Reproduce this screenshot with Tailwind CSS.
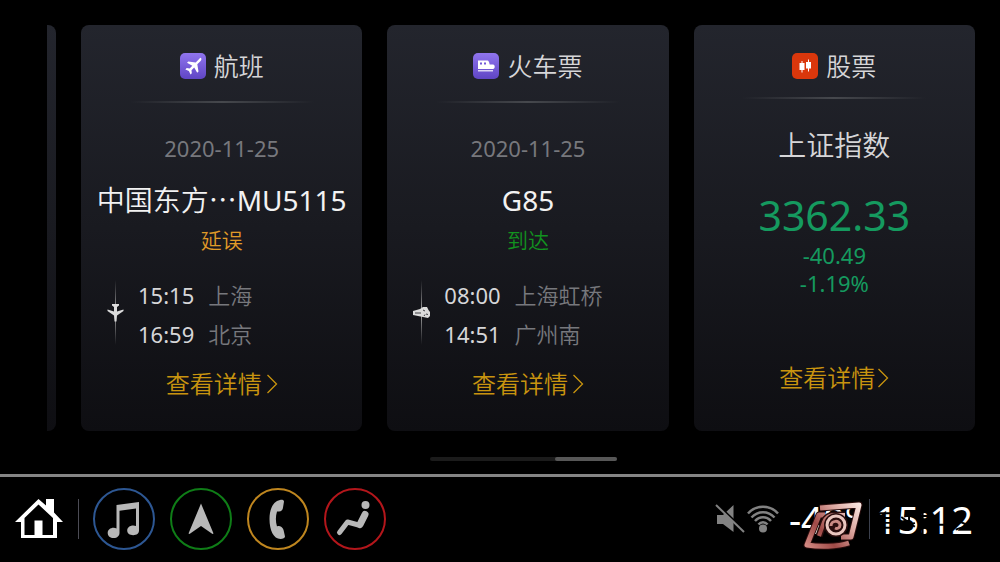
<!DOCTYPE html>
<html lang="zh-CN" class="h-full">

<head>
  <meta charset="UTF-8" />
  <meta name="viewport" content="width=device-width, initial-scale=1.0" />
  <title>车载首页</title>
  <script src="https://cdn.jsdelivr.net/npm/@tailwindcss/browser@4"></script>
</head>

<body class="min-h-screen flex flex-col bg-black text-[#d6d6d8] font-[350] font-['Noto_Sans','Noto_Sans_CJK_SC',sans-serif] overflow-hidden">

  <!-- Cards -->
  <main class="flex-1 flex flex-col pt-[25px] pl-[47px]">
    <div class="flex gap-[25px] pr-[25px]">

      <!-- edge of the previous card -->
      <div class="w-[9px] shrink-0 rounded-r-lg bg-linear-to-b from-[#23252d] via-[#191a20] to-[#0e0e12]"></div>

      <!-- Flight -->
      <article class="flex-1 min-w-0 flex flex-col items-center rounded-lg pt-6 pb-[31px] bg-linear-to-b from-[#23252d] via-[#191a20] to-[#0e0e12]">
        <h2 class="flex items-center gap-2 h-[34px] text-[25px] leading-[34px]">
          <svg class="size-[26px]" viewBox="0 0 26 26">
            <defs>
              <linearGradient id="purple" x1="0" y1="0" x2="0" y2="1">
                <stop offset="0" stop-color="#9075ee" />
                <stop offset="1" stop-color="#5f45c4" />
              </linearGradient>
            </defs>
            <rect width="26" height="26" rx="5" fill="url(#purple)" />
            <path fill="#fff" d="M21 5c.8.8.4 2-.4 2.900l-3.300 3.300 1.200 7.300-1.300 1.300-3-5.200-2.700 2.600.3 3-1.300 1.300-1.600-3.500-3.500-1.600 1.300-1.300 3 .3 2.600-2.700-5.300-3 1.300-1.300 7.400 1.200 3.200-3.400c.8-.8 1.500-1.800 2.100-1.200z" />
          </svg>
          航班
        </h2>
        <div class="mt-[18px] w-[184px] h-[2px] bg-linear-to-r from-transparent via-[#46484d] to-transparent"></div>
        <p class="mt-[29px] text-[22px] leading-8 font-normal text-[#77787d]">2020-11-25</p>
        <p class="mt-4 text-[28px] leading-10 text-[#f2f2f2] whitespace-nowrap">中国东方⋯<span class="font-normal">MU5115</span></p>
        <p class="mt-1 text-[21px] leading-8 text-[#e09b28]">延误</p>
        <div class="mt-5 w-full pl-6 flex gap-[11px] text-[22px] leading-[39px]">
          <svg class="w-[22px] h-[72px] shrink-0" viewBox="0 0 22 72">
            <defs>
              <linearGradient id="track" x1="0" y1="0" x2="0" y2="1">
                <stop offset="0" stop-color="#999" stop-opacity="0" />
                <stop offset=".5" stop-color="#aaa" />
                <stop offset="1" stop-color="#999" stop-opacity="0" />
              </linearGradient>
            </defs>
            <rect x="10" y="4" width="1" height="65" fill="url(#track)" />
            <path fill="#dcdcdc" d="M7 28h7v1.500l-2 1.500v4.500l6.500-2v1.500l-6.500 4.500-.5 6h-2l-.5-6-6.500-4.500v-1.500l6.500 2v-4.500l-2-1.500z" />
          </svg>
          <div class="grid grid-cols-[auto_auto] gap-x-[14px]">
            <time class="font-normal">15:15</time><span class="text-[#77787d]">上海</span>
            <time class="font-normal">16:59</time><span class="text-[#77787d]">北京</span>
          </div>
        </div>
        <a href="#" class="mt-[14px] flex items-center gap-1 text-[24px] leading-8 text-[#c8940f]">查看详情
          <svg class="w-3 h-5" viewBox="0 0 12 20" fill="none" stroke="currentColor" stroke-width="1.300"><path d="M1.500 1l9 9-9 9" /></svg>
        </a>
      </article>

      <!-- Train -->
      <article class="flex-1 min-w-0 flex flex-col items-center rounded-lg pt-6 pb-[31px] bg-linear-to-b from-[#23252d] via-[#191a20] to-[#0e0e12]">
        <h2 class="flex items-center gap-2 h-[34px] text-[25px] leading-[34px]">
          <svg class="size-[26px]" viewBox="0 0 26 26">
            <rect width="26" height="26" rx="5" fill="url(#purple)" />
            <path fill="#fff" d="M5 7.500h9.500c1 0 1.500 1 2.200 4h3.300c1.200 0 1.700 1 1.700 2.200s-.5 2.300-1.700 2.300h-15z" />
            <path fill="#7359d8" d="M7 9.500h2v2h-2zM11 9.500h2v2h-2z" />
            <path fill="#fff" opacity=".75" d="M5 17h15v1.500h-15z" />
          </svg>
          火车票
        </h2>
        <div class="mt-[18px] w-[184px] h-[2px] bg-linear-to-r from-transparent via-[#46484d] to-transparent"></div>
        <p class="mt-[29px] text-[22px] leading-8 font-normal text-[#77787d]">2020-11-25</p>
        <p class="mt-4 text-[28px] leading-10 font-normal text-[#f2f2f2] whitespace-nowrap">G85</p>
        <p class="mt-1 text-[21px] leading-8 text-[#12921f]">到达</p>
        <div class="mt-5 w-full pl-6 flex gap-[11px] text-[22px] leading-[39px]">
          <svg class="w-[22px] h-[72px] shrink-0" viewBox="0 0 22 72">
            <rect x="10" y="4" width="1" height="65" fill="url(#track)" />
            <path fill="#dcdcdc" d="M2 35l7-2 3-2h4l1.500 3 1.500 2v4l-2 2-5-1-10-2z" />
            <path stroke="#17181d" stroke-width=".8" fill="none" d="M4 37h6M12 34l2 1M15 38l2 .5M13 40l1-1.500" />
          </svg>
          <div class="grid grid-cols-[auto_auto] gap-x-[14px]">
            <time class="font-normal">08:00</time><span class="text-[#77787d]">上海虹桥</span>
            <time class="font-normal">14:51</time><span class="text-[#77787d]">广州南</span>
          </div>
        </div>
        <a href="#" class="mt-[14px] flex items-center gap-1 text-[24px] leading-8 text-[#c8940f]">查看详情
          <svg class="w-3 h-5" viewBox="0 0 12 20" fill="none" stroke="currentColor" stroke-width="1.300"><path d="M1.500 1l9 9-9 9" /></svg>
        </a>
      </article>

      <!-- Stock -->
      <article class="flex-1 min-w-0 flex flex-col items-center rounded-lg pt-6 pb-[37px] bg-linear-to-b from-[#23252d] via-[#191a20] to-[#0e0e12]">
        <h2 class="flex items-center gap-2 h-[34px] text-[25px] leading-[34px]">
          <svg class="size-[26px]" viewBox="0 0 26 26">
            <rect width="26" height="26" rx="5" fill="#da370c" />
            <path fill="#fff" d="M9.500 8h1v2h2v7h-2v2.500h-1v-2.500h-2v-7h2zM16 6.500h1v2.500h2v6.500h-2v3h-1v-3h-2v-6.500h2z" />
          </svg>
          股票
        </h2>
        <div class="mt-[14px] w-[184px] h-[2px] bg-linear-to-r from-transparent via-[#46484d] to-transparent"></div>
        <p class="mt-[26px] text-[28px] leading-10">上证指数</p>
        <p class="mt-[26px] text-[41px] leading-[48px] font-normal text-[#159a5f]">3362.33</p>
        <p class="mt-0.5 text-[22px] leading-7 font-normal text-[#159a5f]">-40.49</p>
        <p class="text-[22px] leading-7 font-normal text-[#159a5f]">-1.19%</p>
        <a href="#" class="mt-auto flex items-center gap-0.5 text-[24px] leading-8 text-[#c8940f]">查看详情
          <svg class="w-3 h-5" viewBox="0 0 12 20" fill="none" stroke="currentColor" stroke-width="1.300"><path d="M1.500 1l9 9-9 9" /></svg>
        </a>
      </article>
    </div>

    <!-- scroll position -->
    <div class="mt-[26px] mb-[13px] mx-auto w-[187px] h-1 rounded-full bg-[#1b1b1b] flex justify-end">
      <div class="w-1/3 rounded-full bg-[#575757]"></div>
    </div>
  </main>

  <!-- Bottom bar -->
  <footer class="h-[88px] shrink-0 border-t-3 border-[#858585] pl-[15px] pr-[27px] pb-0.5 flex items-center justify-between">
    <nav class="flex items-center gap-[15px]">
      <button aria-label="主页">
        <svg class="w-12 h-10" viewBox="0 0 48 40" fill="#fff">
          <path fill-rule="evenodd" d="M23.500 0L31 6.500V0h8v13.500l9 9.500h-6v16H6V23H0zM23.500 5.500L9.500 19v17h10V21.500h8V36H38V19z" />
        </svg>
      </button>
      <div class="w-px h-10 -mr-px bg-[#4c4c55]"></div>
      <button aria-label="音乐" class="size-[62px] rounded-full border-2 border-[#2d5793] flex items-center justify-center">
        <svg class="size-10" viewBox="0 0 40 40" fill="#b8b8b8">
          <path d="M12.500 6l22.500-3v28.500c0 2.800-2.300 4.700-5.800 4.700s-6-1.900-6-4.700 2.500-5 6-5c1 0 2 .2 2.800.6V9.500l-16.500 2.200v22c0 3.200-2.300 5.300-5.800 5.300s-6-2-6-5 2.500-5.200 6-5.200c1 0 2 .2 2.800.6z" />
        </svg>
      </button>
      <button aria-label="导航" class="size-[62px] rounded-full border-2 border-[#0f7d17] flex items-center justify-center">
        <svg class="size-10" viewBox="0 0 40 40" fill="#b8b8b8"><path d="M20 4.500l12.500 30-1 .5L20 27 8.500 35l-1-.5z" /></svg>
      </button>
      <button aria-label="电话" class="size-[62px] rounded-full border-2 border-[#bf861f] flex items-center justify-center">
        <svg class="size-10" viewBox="0 0 40 40" fill="#b8b8b8">
          <path d="M22 1c2-.5 4 0 4 1.500l-1 6c-.4 2.500-1.500 4-4 4h-2c-1.500 5-1.500 10 0 15 1-.6 3-.6 4.500.5s2 2.500 2.500 5l1 4.500c0 1.500-2 2.500-4.500 2.500-7 0-11-9-11-20S16 2 22 1z" />
        </svg>
      </button>
      <button aria-label="座椅空调" class="size-[62px] rounded-full border-2 border-[#b3161b] flex items-center justify-center">
        <svg class="size-10" viewBox="0 0 40 40" fill="none" stroke="#b8b8b8" stroke-linecap="round" stroke-linejoin="round">
          <circle cx="30.500" cy="6" r="4" fill="#b8b8b8" stroke="none" />
          <path stroke-width="5" d="M4.500 33.500l8-10.500 11 3" />
          <path stroke-width="7" d="M30 15.500l-5 10" />
        </svg>
      </button>
    </nav>

    <div class="flex items-center text-[38px] leading-[44px] font-normal text-white">
      <svg class="w-[30px] h-[30px]" viewBox="0 0 30 30" fill="#828282">
        <path d="M2 11h6L18.500 1v27L8 20H2z" />
        <path d="M2.500 .5L30 27" stroke="#000" stroke-width="2" />
        <path d="M1 1l28 27" stroke="#828282" stroke-width="2" />
      </svg>
      <svg class="ml-0.5 w-8 h-7" viewBox="0 0 32 28" fill="none" stroke="#828282" stroke-width="2.500">
        <path d="M1 8.500C9-.5 23-.5 31 8.500M4.500 12.500c6.500-7 16.500-7 23 0M8 16c4.500-5 11.500-5 16 0M11.500 19.500c2.500-3 6.500-3 9 0" />
        <circle cx="16" cy="23.500" r="4" fill="#828282" stroke="none" />
      </svg>
      <div class="relative ml-2.5">
        <span>-40°</span>
        <svg class="absolute left-[14px] top-[4px] w-[60px] h-[52px]" viewBox="0 0 60 52" fill="none" stroke-linejoin="round">
          <defs>
            <linearGradient id="badge" x1="60" y1="0" x2="0" y2="50" gradientUnits="userSpaceOnUse">
              <stop offset="0" stop-color="#fff4ef" />
              <stop offset=".35" stop-color="#dba59e" />
              <stop offset=".65" stop-color="#a04a47" />
              <stop offset="1" stop-color="#e09a92" />
            </linearGradient>
          </defs>
          <!-- frame -->
          <g stroke="#2a0d0d" stroke-width="7">
            <path d="M17 7l39-3-8 32H38" />
            <path d="M22 14h-6L4 44c12 2 30 2 42-2" />
          </g>
          <g stroke="url(#badge)" stroke-width="5">
            <path d="M17 7l39-3-8 32H38" />
            <path d="M22 14h-6L4 44c12 2 30 2 42-2" />
          </g>
          <!-- swirl -->
          <path stroke="#2a0d0d" stroke-width="7" d="M16 35l5-14c2-5 6-7 11-7h10" />
          <path stroke="url(#badge)" stroke-width="4" d="M16 35l5-14c2-5 6-7 11-7h10" />
          <circle cx="33" cy="24" r="9" fill="#2a0d0d" stroke="#2a0d0d" stroke-width="6" />
          <circle cx="33" cy="24" r="9" stroke="#e9c6bf" stroke-width="3" />
          <path stroke="#c98a83" stroke-width="3" d="M28 25c0-6 9-6 9-1 0 3-3 4-5 3" />
        </svg>
      </div>
      <div class="ml-2 w-px h-10 bg-[#3b404d]"></div>
      <div class="relative ml-1.5">
        <time>15:12</time>
        <!-- dark scratches over the lower half of the clock -->
        <svg class="absolute inset-0 w-full h-full" viewBox="0 0 100 44" fill="none" stroke="#000" stroke-width="2">
          <path d="M2 16h18M5 21h14M4 26h17M4 31h17M26 20l14 10M28 31l12-5M34 16v8M48 12v26M44 19h12M44 31h12M58 28h18M80 22l14 6M82 33l14-5" />
        </svg>
      </div>
    </div>
  </footer>

</body>

</html>
